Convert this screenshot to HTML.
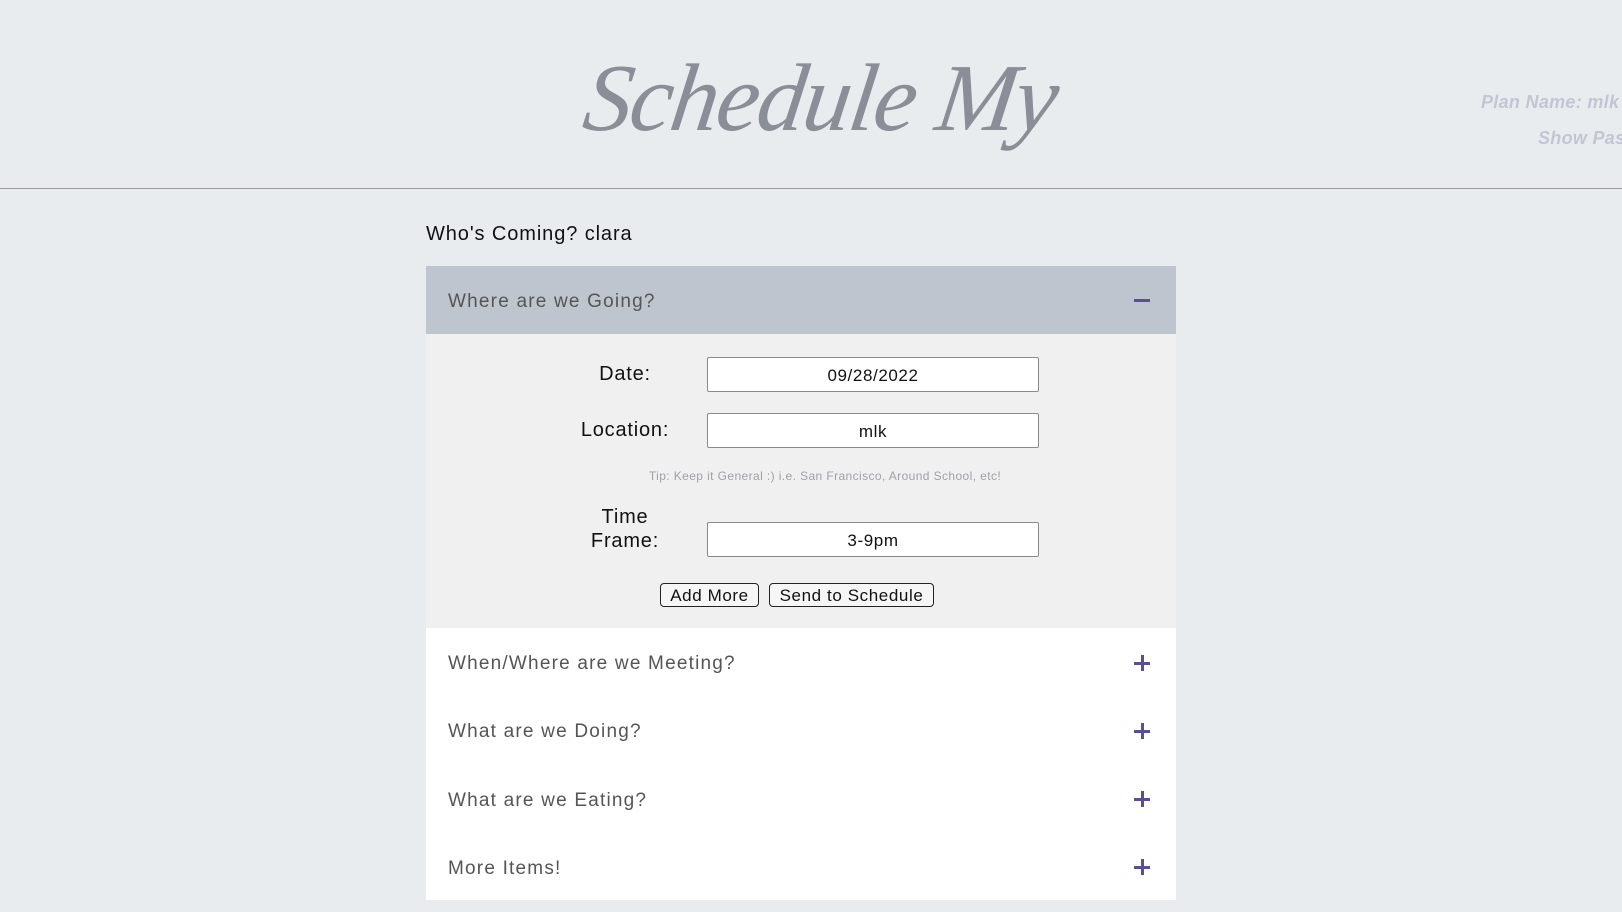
<!DOCTYPE html>
<html><head><meta charset="utf-8"><style>
*{margin:0;padding:0;box-sizing:border-box}
body{width:1622px;height:912px;background:#e9ecef;font-family:"Liberation Sans",sans-serif;position:relative;overflow:hidden}
.a{position:absolute;white-space:nowrap}
.logo{left:584px;top:42px;width:478px;height:130px;font-family:"Liberation Serif",serif;font-style:italic;font-size:96px;color:#8a8e96;font-weight:normal;letter-spacing:-2px;transform:skewX(-8deg)}
.plan{font-style:italic;font-weight:bold;color:#c2c6d2;font-size:18px;letter-spacing:0.3px}
.line{left:0;top:188px;width:1622px;height:1px;background:#9a9a9a}
.card{left:426px;width:750px}
.inp{position:absolute;left:707px;width:332px;height:35px;background:#fff;border:1px solid #8a8a8a;border-radius:2px;text-align:center;font-size:17px;color:#111;line-height:35px;letter-spacing:0.6px}
.lbl{font-size:20px;color:#111;text-align:center;letter-spacing:0.8px}
.btn{position:absolute;top:583px;height:24px;border:1px solid #222;border-radius:4px;background:#f6f6f6;font-size:17px;line-height:23px;text-align:center;color:#111;letter-spacing:0.6px}
.row{position:absolute;left:448px;font-size:19px;color:#555;letter-spacing:1.2px}
.plus{position:absolute;left:1134px;width:16px;height:16px}
.plus:before{content:"";position:absolute;left:0;top:6.5px;width:16px;height:3px;background:#5b4e91}
.plus:after{content:"";position:absolute;left:6.5px;top:0;width:3px;height:16px;background:#5b4e91}
</style></head><body>
<div class="a logo">Schedule My</div>
<div class="a plan" style="left:1481px;top:92px">Plan Name: mlk</div>
<div class="a plan" style="left:1538px;top:128px">Show Past</div>
<div class="a line"></div>
<div class="a" style="left:426px;top:223px;font-size:20px;color:#111;letter-spacing:0.9px">Who's Coming? clara</div>
<div class="a card" style="top:266px;height:68px;background:#bfc5cf"></div>
<div class="a" style="left:448px;top:291px;font-size:19px;color:#555;letter-spacing:1.2px">Where are we Going?</div>
<div class="a" style="left:1134px;top:299px;width:16px;height:3px;background:#5b4e91"></div>
<div class="a card" style="top:334px;height:294px;background:#f0f0f0"></div>
<div class="a lbl" style="left:575px;top:363px;width:100px">Date:</div>
<div class="inp" style="top:357px">09/28/2022</div>
<div class="a lbl" style="left:565px;top:419px;width:120px">Location:</div>
<div class="inp" style="top:413px">mlk</div>
<div class="a" style="left:575px;top:469px;width:500px;text-align:center;font-size:12px;color:#a0a0a8;letter-spacing:0.4px">Tip: Keep it General :) i.e. San Francisco, Around School, etc!</div>
<div class="a lbl" style="left:575px;top:505px;width:100px;line-height:24px;white-space:normal">Time<br>Frame:</div>
<div class="inp" style="top:522px">3-9pm</div>
<div class="btn" style="left:660px;width:99px">Add More</div>
<div class="btn" style="left:769px;width:165px">Send to Schedule</div>
<div class="a card" style="top:628px;height:272px;background:#fff"></div>
<div class="row" style="top:653px">When/Where are we Meeting?</div><div class="plus" style="top:655px"></div>
<div class="row" style="top:721px">What are we Doing?</div><div class="plus" style="top:723px"></div>
<div class="row" style="top:790px">What are we Eating?</div><div class="plus" style="top:791px"></div>
<div class="row" style="top:858px">More Items!</div><div class="plus" style="top:859px"></div>
</body></html>
